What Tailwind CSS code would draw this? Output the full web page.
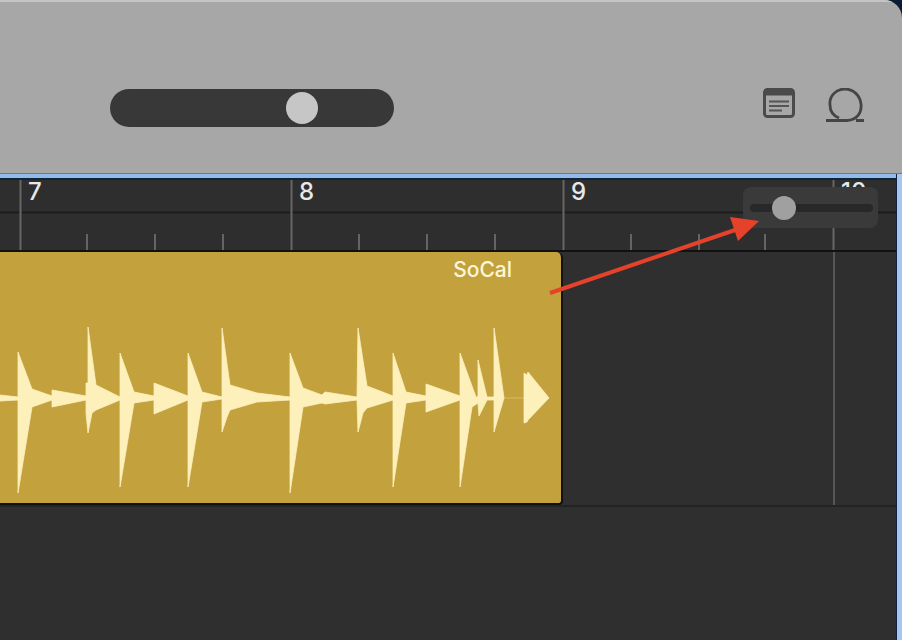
<!DOCTYPE html>
<html lang="en">
<head>
  <meta charset="UTF-8" />
  <title>SoCal region</title>
  <script src="https://cdn.jsdelivr.net/npm/@tailwindcss/browser@4"></script>
</head>
<body class="bg-[#0c1a33] font-['Inter',sans-serif]">
  <div class="relative w-[902px] h-[640px] overflow-hidden rounded-tr-[18px] flex flex-col bg-[#2f2f2f]">

    <!-- toolbar -->
    <header class="h-[173px] shrink-0 flex items-start bg-[#a7a7a7] border-t-2 border-[#c4c4c4] pt-[87px] pl-[110px]">
      <div class="w-[284px] h-[38px] rounded-full bg-[#383838] flex items-center pl-[176px]">
        <div class="w-[32px] h-[32px] rounded-full bg-[#c6c6c6]"></div>
      </div>
      <div class="ml-[369px] -mt-[1px] flex items-start gap-[29px]">
        <svg class="w-[34px] h-[32px]" viewBox="0 0 34 32" fill="none">
          <rect x="1.5" y="1.5" width="29" height="27" rx="3" stroke="#4a4a4a" stroke-width="3" />
          <rect x="1.5" y="1.5" width="29" height="6" rx="2" fill="#4a4a4a" />
          <path d="M6 13.5H26M6 18H26M6 22.5H19" stroke="#555" stroke-width="2" />
        </svg>
        <svg class="w-[40px] h-[36px]" viewBox="0 0 40 36" fill="none">
          <path d="M-1 32.5H21C31 32 36 25 35 16C34 7 27 1 19 1C10 1 3 8 4 17C4 24 8 28 13 30" stroke="#454545" stroke-width="2.8" />
          <path d="M30 32.5H38" stroke="#454545" stroke-width="2.8" />
        </svg>
      </div>
    </header>

    <!-- selection edge -->
    <div class="h-[7px] shrink-0 bg-[#93bbe8] border-t border-t-[#5d7f9f] border-b-2 border-[#10233d]"></div>

    <!-- ruler -->
    <div class="relative h-[72px] shrink-0 bg-[#2f2e2f] border-b-2 border-[#111]">
      <svg class="absolute inset-0 w-[902px] h-[72px]" viewBox="0 180 902 72" fill="none">
        <path d="M0 212.5H902" stroke="#1c1c1c" stroke-width="2" />
        <path d="M20.5 180V250M291.5 180V250M563.5 180V250M833.5 180V250" stroke="#666" stroke-width="2" />
        <path d="M87 234V250M155 234V250M223 234V250M359 234V250M427 234V250M495 234V250M631 234V250M699 234V250M765 234V250" stroke="#777" stroke-width="1.5" />
      </svg>
      <span class="absolute left-[28px] top-0 text-[24px] leading-[24px] font-medium text-[#e8e8e8]">7</span>
      <span class="absolute left-[299px] top-0 text-[24px] leading-[24px] font-medium text-[#e8e8e8]">8</span>
      <span class="absolute left-[571px] top-0 text-[24px] leading-[24px] font-medium text-[#e8e8e8]">9</span>
      <span class="absolute left-[841px] top-0 text-[24px] leading-[24px] font-medium text-[#e8e8e8]">10</span>
    </div>

    <!-- track -->
    <div class="h-[255px] shrink-0 flex border-b-2 border-[#232323] bg-[#2f2f2f]">
      <div class="relative w-[563px] h-[253px] shrink-0 bg-[#c3a13c] rounded-tr-[6px] rounded-br-[4px] border-r-2 border-b-2 border-[#111]">
        <span class="absolute right-[49px] top-[6px] text-[21px] leading-[24px] font-medium text-[#fdf6d8]">SoCal</span>
        <svg class="absolute inset-0 w-[561px] h-[251px]" viewBox="0 252 561 251" fill="#fdf0bb" stroke="#fdf0bb" stroke-width="0.8">
          <path d="M0 395L18 397L18 352L32 389L52 396L52 400L32 407L18 493L18 400L0 401Z" />
          <path d="M52 390L86 396L86 383L88 383L88 327L96 385L120 397L120 400L96 410L92 413L88 433L86 413L86 400L52 407Z" />
          <path d="M120 353L134 392L154 396L154 383L188 396L188 353L202 392L222 397L222 328L230 385L257 393L290 397L290 353L303 388L322 395L325 392L357 397L358 328L367 386L393 396L393 353L406 392L426 396L426 384L460 396L460 353L476 397L478 397L478 360L487 397L494 397L494 328L504 398L494 432L494 400L487 400L479 416L478 403L472 407L460 487L460 400L426 412L426 400L406 403L393 487L393 400L367 408L363 413L358 432L357 400L325 404L322 403L303 407L290 493L290 400L257 402L230 410L227 417L222 432L222 399L202 402L188 487L188 400L154 414L154 400L134 403L120 487Z" />
          <path d="M524 373L527 375L528 372L549 398L528 420L527 422L524 423Z" />
          <path d="M504 397.5H524V398.5H504Z" opacity="0.35" stroke="none" />
        </svg>
      </div>
      <div class="ml-[270px] w-[2px] h-full bg-[#555]"></div>
    </div>

    <!-- floating zoom slider -->
    <div class="absolute left-[743px] top-[187px] w-[135px] h-[41px] rounded-[8px] bg-[#3a3a3a] flex items-center pl-[7px]">
      <div class="relative w-[123px] h-[8px] rounded-full bg-[#282828]">
        <div class="absolute left-[22px] -top-[8px] w-[24px] h-[24px] rounded-full bg-[#a0a0a0]"></div>
      </div>
    </div>

    <!-- annotation arrow -->
    <svg class="absolute inset-0 w-[902px] h-[640px] pointer-events-none" viewBox="0 0 902 640" fill="none">
      <path d="M550 293L738 229" stroke="#e5422b" stroke-width="4" />
      <path d="M759 221L730 217L738 241Z" fill="#e5422b" />
    </svg>

    <!-- right edge of the selection -->
    <div class="absolute right-0 top-[174px] bottom-0 w-[6px] bg-[#a4c6f0] border-l border-[#10233d]"></div>
  </div>
</body>
</html>
